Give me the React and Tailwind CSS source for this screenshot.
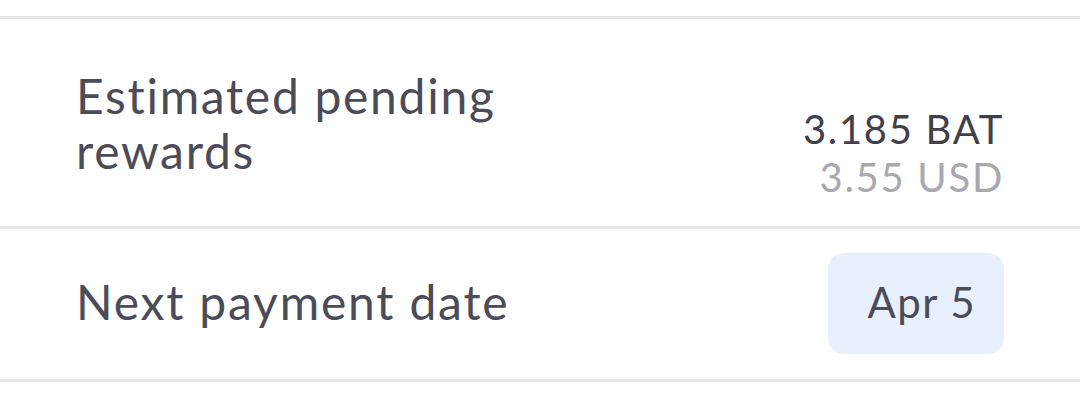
export default function App() {
	return (
		<div
			className="w-[1080px] h-[416px] bg-white overflow-hidden pt-[16px]"
			style={{ fontFamily: 'Lato, "Open Sans", sans-serif' }}>
			<div className="border-t-[3px] border-[#e6e6e8]" />
			<div className="flex items-start justify-between pl-[76px] pr-[76px] h-[207px]">
				<div className="pt-[49px] text-[48px] leading-[55px] tracking-[1.7px] text-[#4b4c58]">
					Estimated pending
					<br />
					rewards
				</div>
				<div className="pt-[86px] flex flex-col items-end text-[40px] leading-[48px] tracking-[1.7px]">
					<span className="text-[#3f4049]">3.185 BAT</span>
					<span className="text-[#a8a9af]">3.55 USD</span>
				</div>
			</div>
			<div className="border-t-[3px] border-[#e6e6e8]" />
			<div className="flex items-start justify-between pl-[76px] pr-[76px] h-[150px]">
				<div className="pt-[45px] text-[48px] leading-[55px] tracking-[1.8px] text-[#4b4c58]">
					Next payment date
				</div>
				<div className="mt-[24px] h-[101px] rounded-[16px] bg-[#e8effd] pl-[40px] pr-[28px] pb-[2px] flex items-center text-[42px] tracking-[1.4px] text-[#4b4c58]">
					Apr 5
				</div>
			</div>
			<div className="border-t-[3px] border-[#e6e6e8]" />
		</div>
	);
}
